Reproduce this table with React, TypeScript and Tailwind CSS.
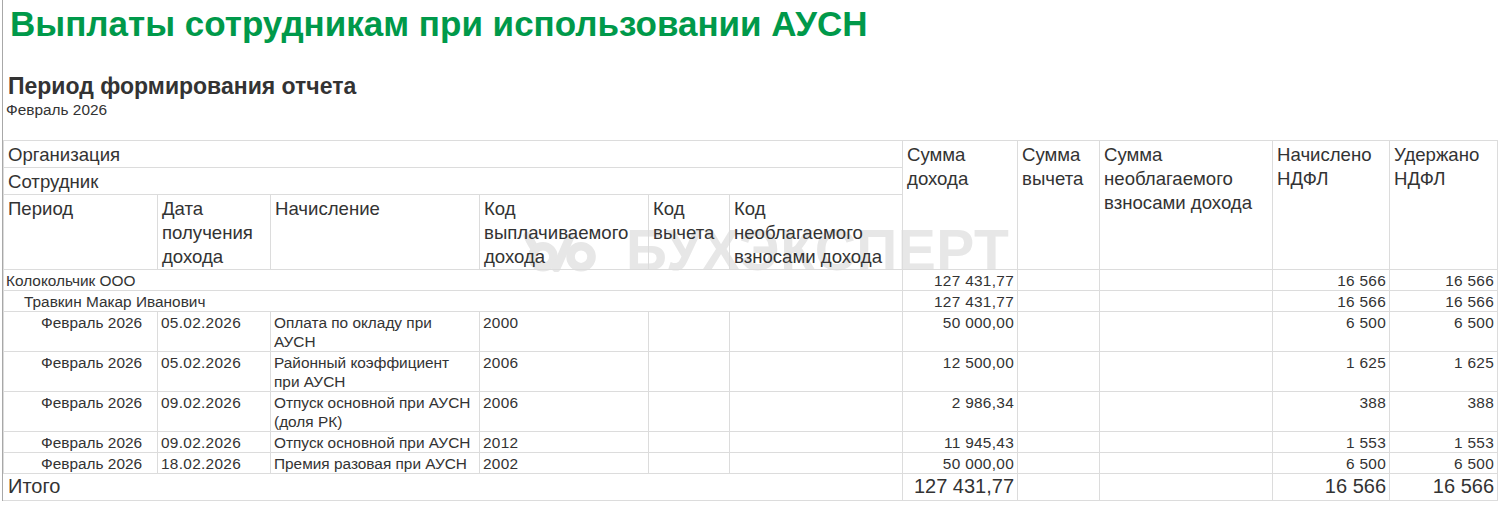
import React from 'react';

const COLS = [154, 113, 209, 169, 81, 173, 115, 82, 173, 117, 108];

interface Line {
    period: string;
    date: string;
    name: string[];
    code: string;
    income: string;
    accrued: string;
    withheld: string;
}

const LINES: Line[] = [
    { period: 'Февраль 2026', date: '05.02.2026', name: ['Оплата по окладу при', 'АУСН'], code: '2000', income: '50 000,00', accrued: '6 500', withheld: '6 500' },
    { period: 'Февраль 2026', date: '05.02.2026', name: ['Районный коэффициент', 'при АУСН'], code: '2006', income: '12 500,00', accrued: '1 625', withheld: '1 625' },
    { period: 'Февраль 2026', date: '09.02.2026', name: ['Отпуск основной при АУСН', '(доля РК)'], code: '2006', income: '2 986,34', accrued: '388', withheld: '388' },
    { period: 'Февраль 2026', date: '09.02.2026', name: ['Отпуск основной при АУСН'], code: '2012', income: '11 945,43', accrued: '1 553', withheld: '1 553' },
    { period: 'Февраль 2026', date: '18.02.2026', name: ['Премия разовая при АУСН'], code: '2002', income: '50 000,00', accrued: '6 500', withheld: '6 500' },
];

const hd = 'border border-[#dcdcdc] px-[4px] pt-[2px] align-top text-left font-normal text-[18.6px] leading-[24px]';
const td = 'border border-[#dcdcdc] px-[3px] pt-[1px] align-top text-[15.4px] leading-[19px] whitespace-nowrap';
const num = `${td} text-right tracking-[0.3px]`;

function Watermark() {
    return (
        <div className="pointer-events-none absolute left-[519px] top-[82px] flex items-center gap-[24px] text-[#e7e7e7]">
            <svg width="80" height="42" viewBox="0 0 84 44" fill="none" stroke="currentColor" strokeWidth="9">
                {/* logo: two rings with a slash */}
                <path d="M6 6 C10 14 12 18 14 20" strokeLinecap="round" />
                <circle cx="22" cy="28" r="11" />
                <circle cx="62" cy="28" r="11" />
                <path d="M36 40 L50 8" strokeLinecap="round" />
            </svg>
            <span className="text-[57px] font-bold leading-none tracking-[0.5px]">БУХЭКСПЕРТ</span>
        </div>
    );
}

export default function App() {
    return (
        <div className="min-h-screen bg-white font-['Liberation_Sans',Arial,sans-serif] text-[#333333]">
            <div className="ml-[2px] border-l border-[#a8a8a8]">
                {/* Report header */}
                <div className="pl-[7px] pt-[4px]">
                    <h1 className="text-[35px] font-bold leading-[40px] text-[#00994a]">
                        Выплаты сотрудникам при использовании АУСН
                    </h1>
                </div>
                <div className="pt-[28px] pl-[5px]">
                    <h2 className="text-[23px] font-bold leading-[28px] text-[#333333]">Период формирования отчета</h2>
                    <p className="-ml-[2px] text-[15.4px] leading-[19px]">Февраль 2026</p>
                </div>

                <div className="relative mt-[21px]">
                    <Watermark />
                    <table className="relative table-fixed border-collapse" style={{ width: 1494 }}>
                        <colgroup>
                            {COLS.map((w, i) => (
                                <col key={i} style={{ width: w }} />
                            ))}
                        </colgroup>
                        <thead>
                            <tr>
                                <th colSpan={6} className={hd}>Организация</th>
                                <th rowSpan={3} className={hd}>Сумма<br />дохода</th>
                                <th rowSpan={3} className={hd}>Сумма<br />вычета</th>
                                <th rowSpan={3} className={hd}>Сумма<br />необлагаемого<br />взносами дохода</th>
                                <th rowSpan={3} className={hd}>Начислено<br />НДФЛ</th>
                                <th rowSpan={3} className={hd}>Удержано<br />НДФЛ</th>
                            </tr>
                            <tr>
                                <th colSpan={6} className={hd}>Сотрудник</th>
                            </tr>
                            <tr>
                                <th className={hd}>Период</th>
                                <th className={hd}>Дата<br />получения<br />дохода</th>
                                <th className={hd}>Начисление</th>
                                <th className={hd}>Код<br />выплачиваемого<br />дохода</th>
                                <th className={hd}>Код<br />вычета</th>
                                <th className={hd}>Код<br />необлагаемого<br />взносами дохода</th>
                            </tr>
                        </thead>
                        <tbody>
                            <tr>
                                <td colSpan={6} className={`${td} pl-[2px]`}>Колокольчик ООО</td>
                                <td className={num}>127 431,77</td>
                                <td className={td}></td>
                                <td className={td}></td>
                                <td className={num}>16 566</td>
                                <td className={num}>16 566</td>
                            </tr>
                            <tr>
                                <td colSpan={6} className={`${td} pl-[20px]`}>Травкин Макар Иванович</td>
                                <td className={num}>127 431,77</td>
                                <td className={td}></td>
                                <td className={td}></td>
                                <td className={num}>16 566</td>
                                <td className={num}>16 566</td>
                            </tr>
                            {LINES.map((l, i) => (
                                <tr key={i}>
                                    <td className={`${td} pl-[37px]`}>{l.period}</td>
                                    <td className={`${td} tracking-[0.3px]`}>{l.date}</td>
                                    <td className={td}>
                                        {l.name.map((s, j) => (
                                            <div key={j}>{s}</div>
                                        ))}
                                    </td>
                                    <td className={`${td} tracking-[0.3px]`}>{l.code}</td>
                                    <td className={td}></td>
                                    <td className={td}></td>
                                    <td className={num}>{l.income}</td>
                                    <td className={td}></td>
                                    <td className={td}></td>
                                    <td className={num}>{l.accrued}</td>
                                    <td className={num}>{l.withheld}</td>
                                </tr>
                            ))}
                            <tr className="h-[27px] text-[20px] leading-[25px]">
                                <td colSpan={6} className="border border-[#dcdcdc] border-l-white px-[4px] align-top">Итого</td>
                                <td className="border border-[#dcdcdc] px-[3px] text-right align-top">127 431,77</td>
                                <td className="border border-[#dcdcdc]"></td>
                                <td className="border border-[#dcdcdc]"></td>
                                <td className="border border-[#dcdcdc] px-[3px] text-right align-top">16 566</td>
                                <td className="border border-[#dcdcdc] px-[3px] text-right align-top">16 566</td>
                            </tr>
                        </tbody>
                    </table>
                </div>
            </div>
        </div>
    );
}
